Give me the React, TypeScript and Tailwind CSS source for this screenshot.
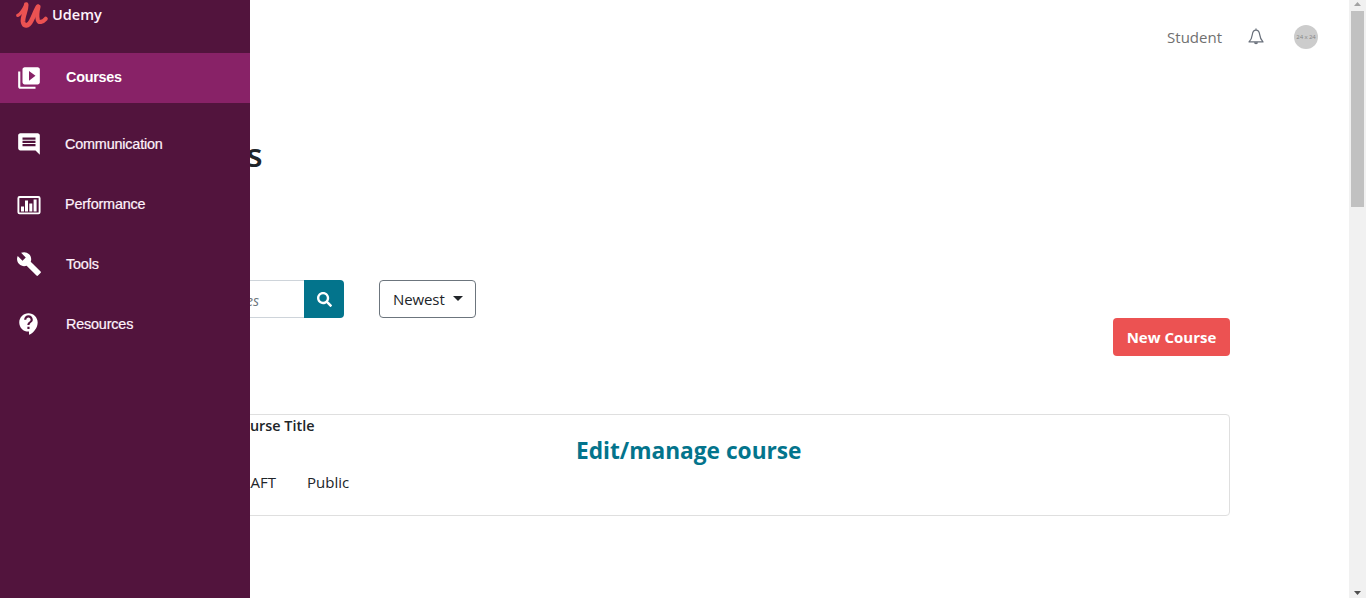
import type { ReactNode } from 'react';
import { MdBuild, MdComment, MdContactSupport, MdVideoLibrary } from 'react-icons/md';
import { FaSearch } from 'react-icons/fa';

function PerformanceIcon() {
  return (
    <svg className="shrink-0 translate-y-px" width="24" height="20" viewBox="0 0 24 20" fill="none">
      <rect x="1.400" y="2" width="21.200" height="16.400" rx="1.200" stroke="currentColor" strokeWidth="1.900" />
      <path d="M4 11.500h3v5H4zM8 5.500h3v11H8zM12.300 8.500h3v8h-3zM16.600 4.500h3v12h-3z" fill="currentColor" />
    </svg>
  );
}

function Logo() {
  return (
    <svg width="34" height="30" viewBox="0 0 34 30" fill="none" stroke="#eb5252" strokeLinecap="round" strokeLinejoin="round">
      <path d="M2.800 15.300C6 14.500 9 8.500 11.300 4.500" strokeWidth="3.400" />
      <path d="M11.200 4.700C11.300 10.700 7.500 16.200 8 21.500C8.800 27.200 13.500 26.500 16.300 20.800C18.800 15.800 20.800 10.300 22.800 7" strokeWidth="4.700" />
      <path d="M23.500 6.500C22.300 11.500 21.800 16.300 22.800 19.800C23.900 23.300 27.500 22.300 30.700 18.800" strokeWidth="4.200" />
    </svg>
  );
}

function BellIcon() {
  return (
    <svg width="16" height="18" viewBox="0 0 16 18" fill="none" stroke="#686f7a" strokeWidth="1.250" strokeLinejoin="round">
      <path d="M8 .5v1.600M1 13.900h14c-1.900-1.800-2.900-4-3.300-7.200C11.400 4 10 2.100 8 2.100S4.600 4 4.300 6.700C3.900 9.900 2.900 12.100 1 13.900Z" />
      <path d="M6 14.200h4a2 2 0 0 1-4 0Z" fill="#686f7a" stroke="none" />
    </svg>
  );
}

function NavItem({ icon, label, indent }: { icon: ReactNode; label: string; indent: string }) {
  return (
    <a className="flex h-[60px] items-center">
      <span className="flex w-6 shrink-0 justify-center text-white">{icon}</span>
      <span className={`text-[14.4px] leading-5 [-webkit-text-stroke:0.2px] ${indent}`}>{label}</span>
    </a>
  );
}

function Sidebar() {
  return (
    <nav className="absolute inset-y-0 left-0 z-10 w-[250px] bg-[#52143d] font-['Liberation_Sans',Arial,sans-serif] text-[#fff2fb]">
      <div className="flex h-[53px] items-start pl-[15px]">
        <Logo />
        <span className="ml-[3px] mt-[5px] font-['Open_Sans',sans-serif] text-[14.500px] font-semibold leading-5">Udemy</span>
      </div>
      <a className="flex h-[50px] items-center bg-[#882267] pl-[17px] text-white">
        <span className="flex w-6 justify-center">
          <MdVideoLibrary className="size-[26px] shrink-0" />
        </span>
        <span className="ml-[25px] pb-0.5 text-[14.4px] font-bold leading-5 tracking-[-0.25px]">Courses</span>
      </a>
      <div className="flex flex-col pl-[17px] pt-[11px]">
        <NavItem icon={<MdComment className="size-[26px] shrink-0" />} label="Communication" indent="ml-6 tracking-[-0.18px]" />
        <NavItem icon={<PerformanceIcon />} label="Performance" indent="ml-6 tracking-[-0.18px]" />
        <NavItem icon={<MdBuild className="size-[26px] shrink-0" />} label="Tools" indent="ml-[25px] tracking-[-0.18px]" />
        <NavItem icon={<MdContactSupport className="size-[26px] shrink-0" />} label="Resources" indent="ml-[25px] tracking-[-0.18px]" />
      </div>
    </nav>
  );
}

function Scrollbar() {
  return (
    <div className="flex w-[17px] shrink-0 flex-col items-center bg-[#f1f1f1]">
      <div className="flex h-[11px] items-start pt-0.5">
        <svg width="7" height="4" viewBox="0 0 7 4" fill="#a3a3a3"><path d="M0 4 3.500 0 7 4z" /></svg>
      </div>
      <div className="h-[196px] w-[13px] bg-[#c1c1c1]" />
      <svg className="mb-[3px] mt-auto" width="7" height="4" viewBox="0 0 7 4" fill="#505050"><path d="M0 0h7L3.500 4z" /></svg>
    </div>
  );
}

export default function App() {
  return (
    <div className="relative flex h-[598px] w-full overflow-hidden bg-white font-['Open_Sans','Noto_Sans',sans-serif] text-[#212529]">
      <Sidebar />
      <main className="flex min-w-0 flex-1 flex-col">
        <header className="flex h-[74px] items-center justify-end pr-[31px] text-[#707070]">
          <span className="text-[15px] leading-6">Student</span>
          <span className="ml-[26px]"><BellIcon /></span>
          <span className="ml-[30px] flex size-6 items-center justify-center whitespace-nowrap rounded-full bg-[#cccccc] text-[6px] tracking-[-0.1px] text-[#858585]">24 x 24</span>
        </header>

        <h1 className="mt-[61px] w-[262.500px] text-right text-[33px] font-semibold leading-10">s</h1>

        <div className="mt-[105px] flex h-[38px] pl-[120px]">
          <div className="flex w-[184px] items-center justify-end border border-r-0 border-[#ced4da] pr-[45px] pt-0.5 text-[14px] italic text-[#6c757d]">
            <span className="whitespace-nowrap">Search courses</span>
          </div>
          <button className="flex w-10 items-center justify-center rounded-r-[4px] bg-[#03748c] text-white">
            <FaSearch className="size-[15px]" />
          </button>
          <button className="ml-[35px] flex w-[97px] items-center rounded-[4px] border border-[#6c757d] pl-[13px] text-[15px] tracking-[-0.1px]">
            Newest
            <svg className="ml-2 -mt-px" width="10" height="5" viewBox="0 0 10 5" fill="currentColor"><path d="M0 0h10L5 5z" /></svg>
          </button>
        </div>

        <div className="flex justify-end pr-[119px]">
          <button className="h-[38px] w-[117px] rounded-[4px] bg-[#ec5252] text-[15px] font-bold leading-6 text-white">New Course</button>
        </div>

        <section className="ml-[120px] mr-[119px] mt-[58px] flex h-[102px] rounded-[4px] border border-[#dfdfdf]">
          <div className="flex w-[455px] shrink-0 flex-col">
            <h2 className="w-[193.500px] text-right text-[14.400px] font-semibold leading-[22px]">Course Title</h2>
            <div className="mt-[33px] flex text-[15px] leading-6">
              <span className="w-[155px] text-right">DRAFT</span>
              <span className="ml-[31px]">Public</span>
            </div>
          </div>
          <a className="mt-5 whitespace-nowrap text-[22.700px] font-bold leading-8 text-[#03748c]">Edit/manage course</a>
        </section>
      </main>
      <Scrollbar />
    </div>
  );
}
